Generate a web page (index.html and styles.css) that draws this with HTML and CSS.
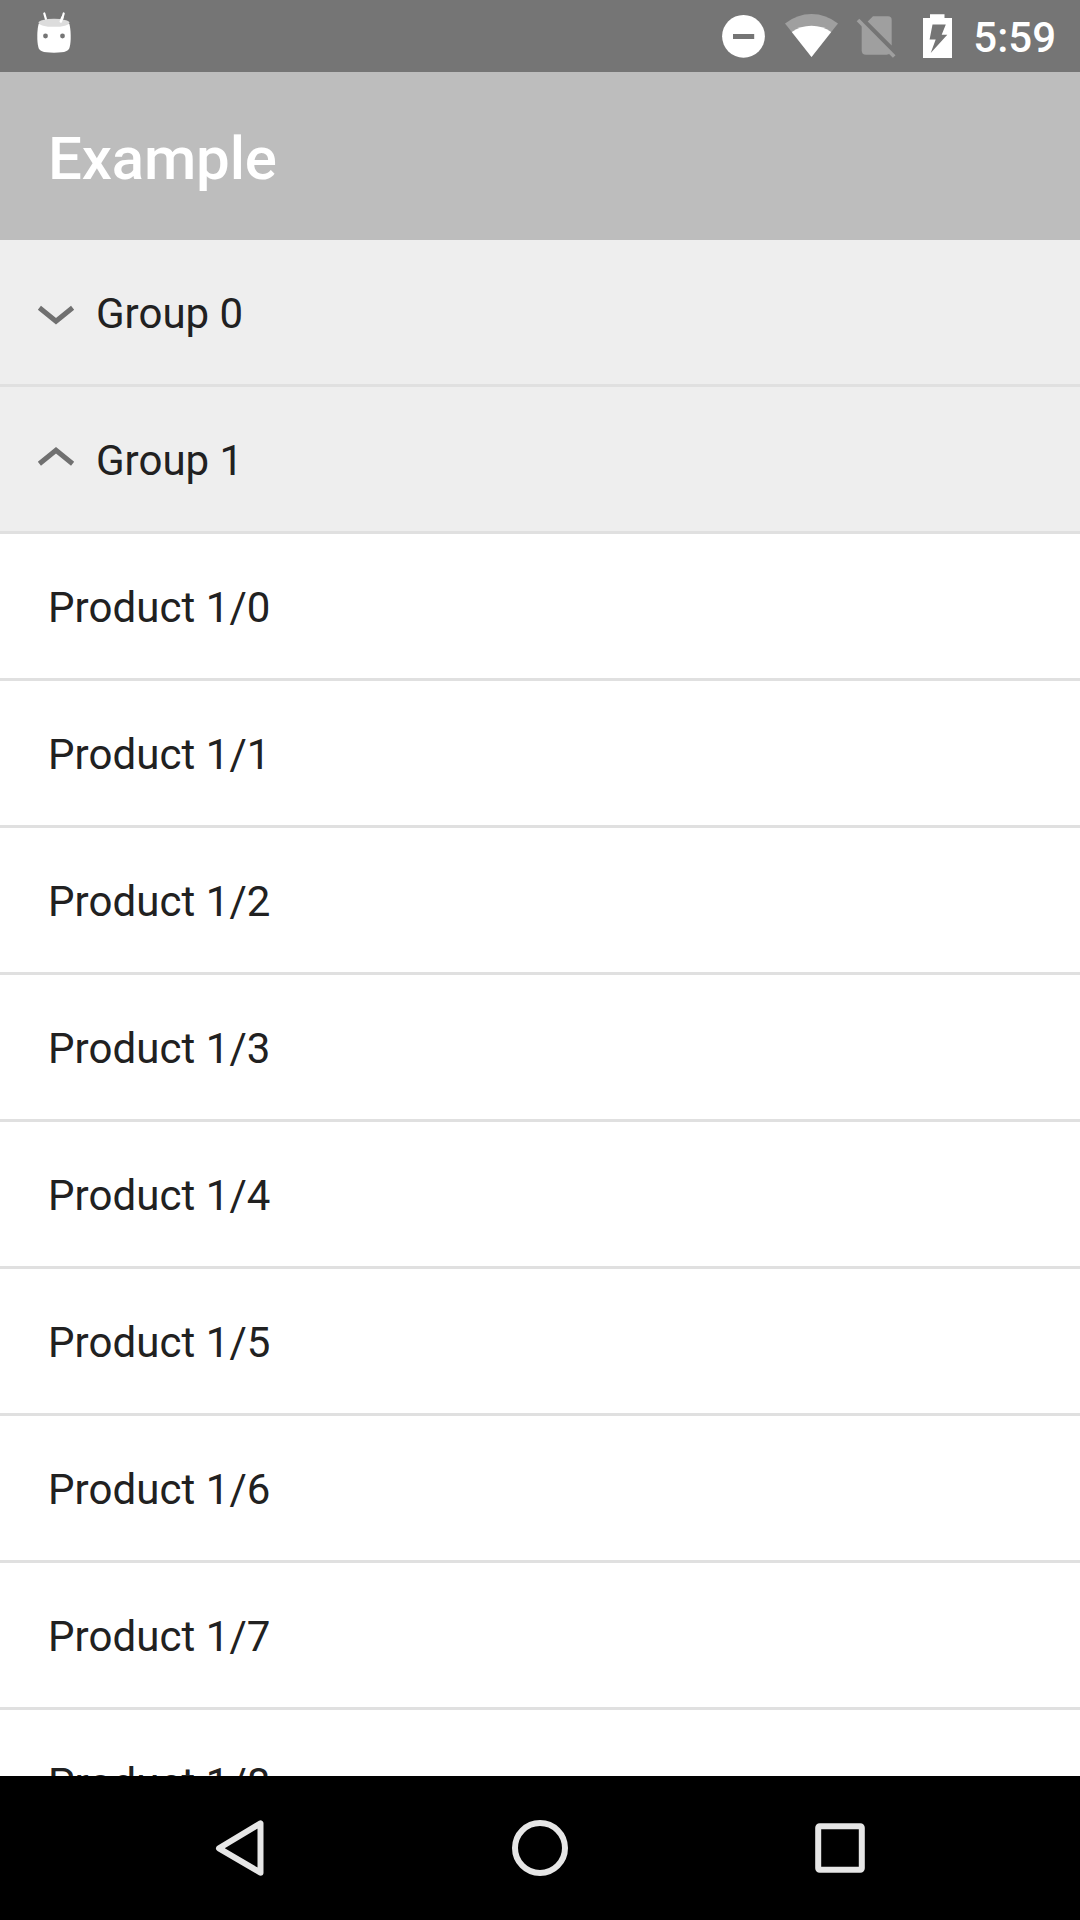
FILE: index.html
```html
<!DOCTYPE html>
<html lang="en">
<head>
<meta charset="utf-8">
<title>Example</title>
<link rel="stylesheet" href="styles.css">
</head>
<body>
<div class="screen">
  <div class="status-bar">
    <svg class="notification" width="80" height="72" viewBox="20 0 80 72">
      <path d="M44.3 13.5L46.5 21M63.7 13.5L61.5 21" stroke="#fff" stroke-width="2.2" stroke-linecap="round"/>
      <path d="M38.6 24C37 30 36.8 41 38.3 47C39.3 51 42 52.7 54 52.7S68.700 51 69.700 47C71.200 41 71 30 69.400 24Z" fill="#fff"/>
      <ellipse cx="54" cy="22.800" rx="15.500" ry="4" fill="#dcdcdc"/>
      <path d="M60.800 21.500L62.300 17.500" stroke="#fff" stroke-width="2.500" stroke-linecap="round"/>
      <circle cx="45.500" cy="36" r="2.400" fill="#757575"/>
      <circle cx="62.500" cy="36" r="2.400" fill="#757575"/>
    </svg>
    <div class="status-icons">
      <svg width="66" height="72" viewBox="710 0 66 72">
        <circle cx="743.500" cy="36.300" r="21.400" fill="#fff"/>
        <path d="M733 34H754.200V39H733Z" fill="#757575"/>
      </svg>
      <svg width="72" height="72" viewBox="776 0 72 72">
        <path d="M811.500 57L785 23.500Q797 14 811.500 14T838 23.500Z" fill="#9f9f9f"/>
        <path d="M811.500 57L791.800 32Q800.500 25.700 811.500 25.700T831.200 32Z" fill="#fff"/>
      </svg>
      <svg width="60" height="72" viewBox="848 0 60 72">
        <path d="M873 16.300H888Q891.700 16.300 891.700 20V45.500L867.700 21.500Z" fill="#9f9f9f"/>
        <path d="M861.700 24.500L890 53Q889 54.700 886.500 54.700H866Q861.700 54.700 861.700 50.500Z" fill="#9f9f9f"/>
        <path d="M858 20L894.200 56.500" stroke="#9f9f9f" stroke-width="3.700" fill="none"/>
      </svg>
      <svg width="60" height="72" viewBox="908 0 60 72">
        <path d="M930 14.300H944.500V18H952V58H923V18H930Z" fill="#fff"/>
        <path d="M932.500 24.500H945.800L941.700 34.700H947.300L930.700 53L935.700 39.500H929.600Z" fill="#757575"/>
      </svg>
    </div>
    <span class="clock">5:59</span>
  </div>
  <header class="app-bar"><h1 class="title">Example</h1></header>
  <main class="list">
    <div class="row group">
      <svg class="chevron" width="48" height="48" viewBox="0 0 48 48"><path d="M7.400 17.800L24 31.300L40.600 17.800"/></svg>
      <span>Group 0</span>
    </div>
    <div class="row group">
      <svg class="chevron" width="48" height="48" viewBox="0 0 48 48"><path d="M7.400 26.800L24 13.300L40.600 26.800"/></svg>
      <span>Group 1</span>
    </div>
    <div class="row">Product 1/0</div>
    <div class="row">Product 1/1</div>
    <div class="row">Product 1/2</div>
    <div class="row">Product 1/3</div>
    <div class="row">Product 1/4</div>
    <div class="row">Product 1/5</div>
    <div class="row">Product 1/6</div>
    <div class="row">Product 1/7</div>
    <div class="row">Product 1/8</div>
  </main>
  <nav class="nav-bar">
    <svg width="60" height="60" viewBox="210 1818 60 60"><path d="M260.500 1823.300V1872.700L219 1848.300Z"/></svg>
    <svg width="60" height="60" viewBox="510 1818 60 60"><circle cx="540" cy="1848" r="25"/></svg>
    <svg width="60" height="60" viewBox="810 1818 60 60"><rect x="818.200" y="1826.200" width="43.600" height="43.600" rx="1.500"/></svg>
  </nav>
</div>
</body>
</html>
```

FILE: styles.css
```css
* {
  box-sizing: border-box;
}

body {
  margin: 0;
  font-family: Roboto, "Liberation Sans", sans-serif;
  font-size: 42px;
  color: #212121;
}

svg {
  display: block;
  flex: none;
}

.screen {
  display: flex;
  flex-direction: column;
  width: 1080px;
  height: 1920px;
  overflow: hidden;
  background: #fff;
}

.status-bar {
  display: flex;
  align-items: center;
  flex: none;
  height: 72px;
  padding: 0 24px 0 20px;
  background: #757575;
  color: #fff;
}

.notification path,
.nav-bar path {
  stroke-linejoin: round;
}

.status-icons {
  display: flex;
  margin-left: auto;
}

.clock {
  padding: 3px 0 0 5px;
  font-weight: 500;
  line-height: 49px;
}

.app-bar {
  display: flex;
  align-items: center;
  flex: none;
  height: 168px;
  padding: 5px 48px 0;
  background: #bdbdbd;
}

.title {
  margin: 0;
  font-size: 60px;
  font-weight: 500;
  line-height: 70px;
  letter-spacing: -0.15px;
  color: #fff;
}

.list {
  flex: 1;
  min-height: 0;
  overflow: hidden;
}

.row {
  display: flex;
  align-items: center;
  height: 147px;
  padding: 3px 48px 0;
  line-height: 49px;
  letter-spacing: 0.06px;
  border-bottom: 3px solid #e0e0e0;
}

.group {
  gap: 16px;
  padding-left: 32px;
  letter-spacing: 0;
  background: #eee;
}

.chevron path {
  fill: none;
  stroke: #707070;
  stroke-width: 5;
}

.nav-bar {
  display: flex;
  align-items: center;
  justify-content: center;
  gap: 240px;
  flex: none;
  height: 144px;
  background: #000;
}

.nav-bar svg {
  fill: none;
  stroke: #e6e6e6;
  stroke-width: 6;
}
```
